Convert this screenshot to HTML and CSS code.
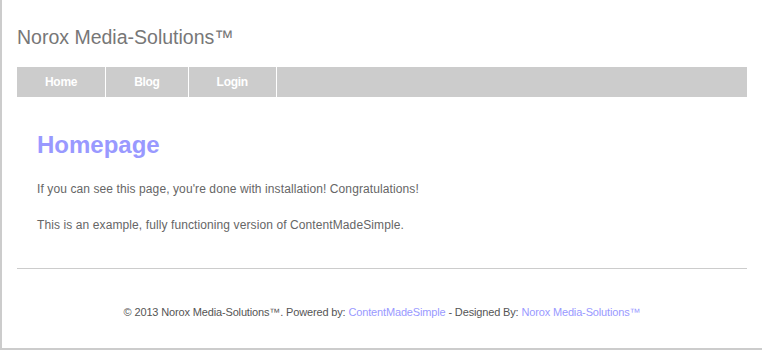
FILE: index.html
```html
<!DOCTYPE html>
<html lang="en">
<head>
    <meta charset="UTF-8">
    <meta name="viewport" content="width=device-width, initial-scale=1.0">
    <title>Homepage - Norox Media-Solutions™</title>
    <link rel="stylesheet" href="styles.css">
</head>
<body>
    <div id="wrapper">
        <!-- Header -->
        <div class="header">
            <div class="site-title">Norox Media-Solutions™</div>
        </div>

        <!-- Menu -->
        <ul class="menu">
            <li><a href="#">Home</a></li>
            <li><a href="#">Blog</a></li>
            <li><a href="#">Login</a></li>
        </ul>

        <!-- Content -->
        <div class="content">
            <h1>Homepage</h1>
            <p>If you can see this page, you're done with installation! Congratulations!</p>
            <p>This is an example, fully functioning version of ContentMadeSimple.</p>
        </div>

        <hr class="divider">

        <!-- Footer -->
        <div class="footer">
            © 2013 Norox Media-Solutions™. Powered by: <a href="#">ContentMadeSimple</a> - Designed By: <a href="#">Norox Media-Solutions™</a>
        </div>
    </div>
</body>
</html>
```

FILE: styles.css
```css
body {
    margin: 0;
    font-family: "Liberation Sans", Arial, sans-serif;
    background-color: white;
}
#wrapper {
    width: 730px;
    height: 348px;
    padding: 0 15px;
    border-left: 2px solid #cccccc;
    border-bottom: 2px solid #cccccc;
    overflow: hidden;
}
.header {
    padding: 25px 0 18px;
}
.site-title {
    font-size: 19.5px;
    line-height: 24px;
    color: #777777;
}
.menu {
    list-style: none;
    margin: 0;
    padding: 0;
    display: flex;
    height: 30px;
    background-color: #cccccc;
}
.menu li {
    border-right: 1px solid white;
}
.menu a {
    display: block;
    padding: 0 28px;
    line-height: 30px;
    font-size: 12px;
    font-weight: bold;
    letter-spacing: -0.3px;
    color: white;
    text-decoration: none;
}
.content {
    padding: 33px 20px 0;
}
.content h1 {
    margin: 0 0 20px;
    font-size: 24px;
    line-height: 30px;
    color: #9999ff;
}
.content p {
    margin: 0 0 18px;
    font-size: 12px;
    line-height: 18px;
    letter-spacing: 0.1px;
    color: #666666;
}
.divider {
    border: none;
    border-top: 1px solid #cccccc;
    margin: 34px 0 0;
}
.footer {
    padding-top: 35px;
    text-align: center;
    font-size: 11px;
    line-height: 16px;
    letter-spacing: -0.15px;
    color: #555555;
}
.footer a {
    color: #9999ff;
    text-decoration: none;
}
```
